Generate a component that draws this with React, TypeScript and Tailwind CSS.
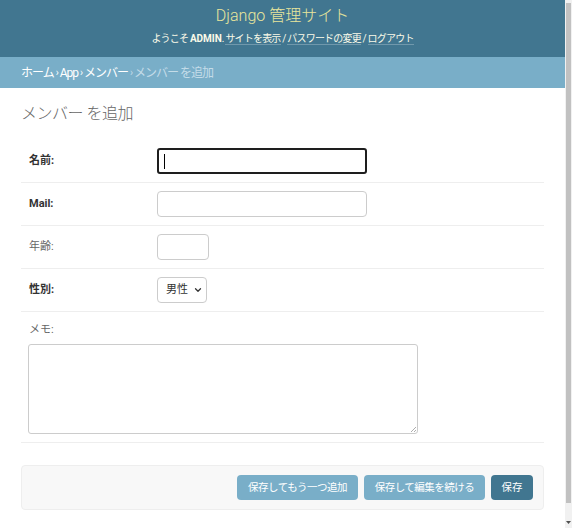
import { ChevronDown } from 'lucide-react';

const font = { fontFamily: "Roboto, 'Noto Sans CJK JP', sans-serif" };

function Row({ label, bold, children }: { label: string; bold?: boolean; children: React.ReactNode }) {
  return (
    <div className="flex items-center py-[8px] pl-[8px] border-b border-[#eee]">
      <label
        className={`w-[128px] text-[11px] ${bold ? 'font-bold text-[#333]' : 'text-[#666]'}`}
      >
        {label}
      </label>
      {children}
    </div>
  );
}

export default function App() {
  return (
    <div className="flex w-[572px] h-[528px] overflow-hidden bg-white" style={font}>
      <div className="w-[565px] flex flex-col">
        {/* Header */}
        <div className="h-[57px] bg-[#417690] flex flex-col items-center pt-[6px]">
          <h1 className="text-[16px] leading-[20px] font-light text-[#e9e69c]">Django 管理サイト</h1>
          <div className="mt-[6px] text-[10px] leading-[14px] text-[#fafae8] tracking-[-0.8px]">
            ようこそ <strong className="font-bold tracking-normal">ADMIN</strong>.{' '}
            <span className="border-b border-white/25">サイトを表示</span> /{' '}
            <span className="border-b border-white/25">パスワードの変更</span> /{' '}
            <span className="border-b border-white/25">ログアウト</span>
          </div>
        </div>

        {/* Breadcrumbs */}
        <div className="h-[31px] bg-[#79aec8] flex items-center pl-[21px] text-[12px] text-white tracking-[-1px]">
          ホーム<span className="mx-[2px] text-[10px]">›</span>App<span className="mx-[2px] text-[10px]">›</span>メンバー
          <span className="mx-[2px] text-[10px] text-[#c4dce8]">›</span>
          <span className="text-[#c4dce8]">メンバー を追加</span>
        </div>

        {/* Content */}
        <div className="px-[21px] pt-[16px]">
          <h2 className="text-[16px] leading-[20px] font-light text-[#666] mb-[16px] tracking-[-0.5px]">
            メンバー を追加
          </h2>

          <Row label="名前:" bold>
            <div className="w-[210px] h-[26px] border-2 border-[#1e1e1e] rounded-[3px] flex items-center">
              <span className="ml-[5px] w-px h-[15px] bg-black" />
            </div>
          </Row>
          <Row label="Mail:" bold>
            <div className="w-[210px] h-[26px] border border-[#ccc] rounded-[4px]" />
          </Row>
          <Row label="年齢:">
            <div className="w-[52px] h-[26px] border border-[#ccc] rounded-[4px]" />
          </Row>
          <Row label="性別:" bold>
            <div className="w-[50px] h-[26px] border border-[#ccc] rounded-[4px] flex items-center pl-[8px] text-[11px] text-[#333]">
              男性
              <ChevronDown className="ml-[5px] w-[10px] h-[10px] text-[#333]" strokeWidth={3} />
            </div>
          </Row>

          <div className="flex flex-col py-[8px] pl-[7px] border-b border-[#eee]">
            <label className="pl-[1px] text-[11px] leading-[20px] text-[#666]">メモ:</label>
            <div className="relative mt-[4px] w-[390px] h-[90px] border border-[#ccc] rounded-[3px]">
              <svg className="absolute right-[1px] bottom-[1px]" width="6" height="6" viewBox="0 0 6 6">
                <path d="M6 1 L1 6 M6 4 L4 6" stroke="#999" strokeWidth="0.8" />
              </svg>
            </div>
          </div>

          {/* Submit row */}
          <div className="mt-[22px] h-[45px] bg-[#f8f8f8] border border-[#eee] rounded-[4px] flex items-center justify-end pr-[10px] gap-[6px]">
            <button className="w-[121px] h-[25px] rounded-[4px] bg-[#79aec8] text-white text-[10.5px] tracking-[-0.5px]">
              保存してもう一つ追加
            </button>
            <button className="w-[121px] h-[25px] rounded-[4px] bg-[#79aec8] text-white text-[10.5px] tracking-[-0.5px]">
              保存して編集を続ける
            </button>
            <button className="w-[42px] h-[25px] rounded-[4px] bg-[#417690] text-white text-[10.5px]">
              保存
            </button>
          </div>
        </div>
      </div>

      {/* Scrollbar */}
      <div className="w-[7px] bg-[#f1f1f1] flex flex-col items-center">
        <div className="mt-[3px] w-[5px] h-[500px] bg-[#c1c1c1]" />
        <div className="flex-1" />
        <svg className="mb-[3px]" width="5" height="4" viewBox="0 0 5 4">
          <path d="M0 0 L5 0 L2.5 3 Z" fill="#505050" />
        </svg>
      </div>
    </div>
  );
}
